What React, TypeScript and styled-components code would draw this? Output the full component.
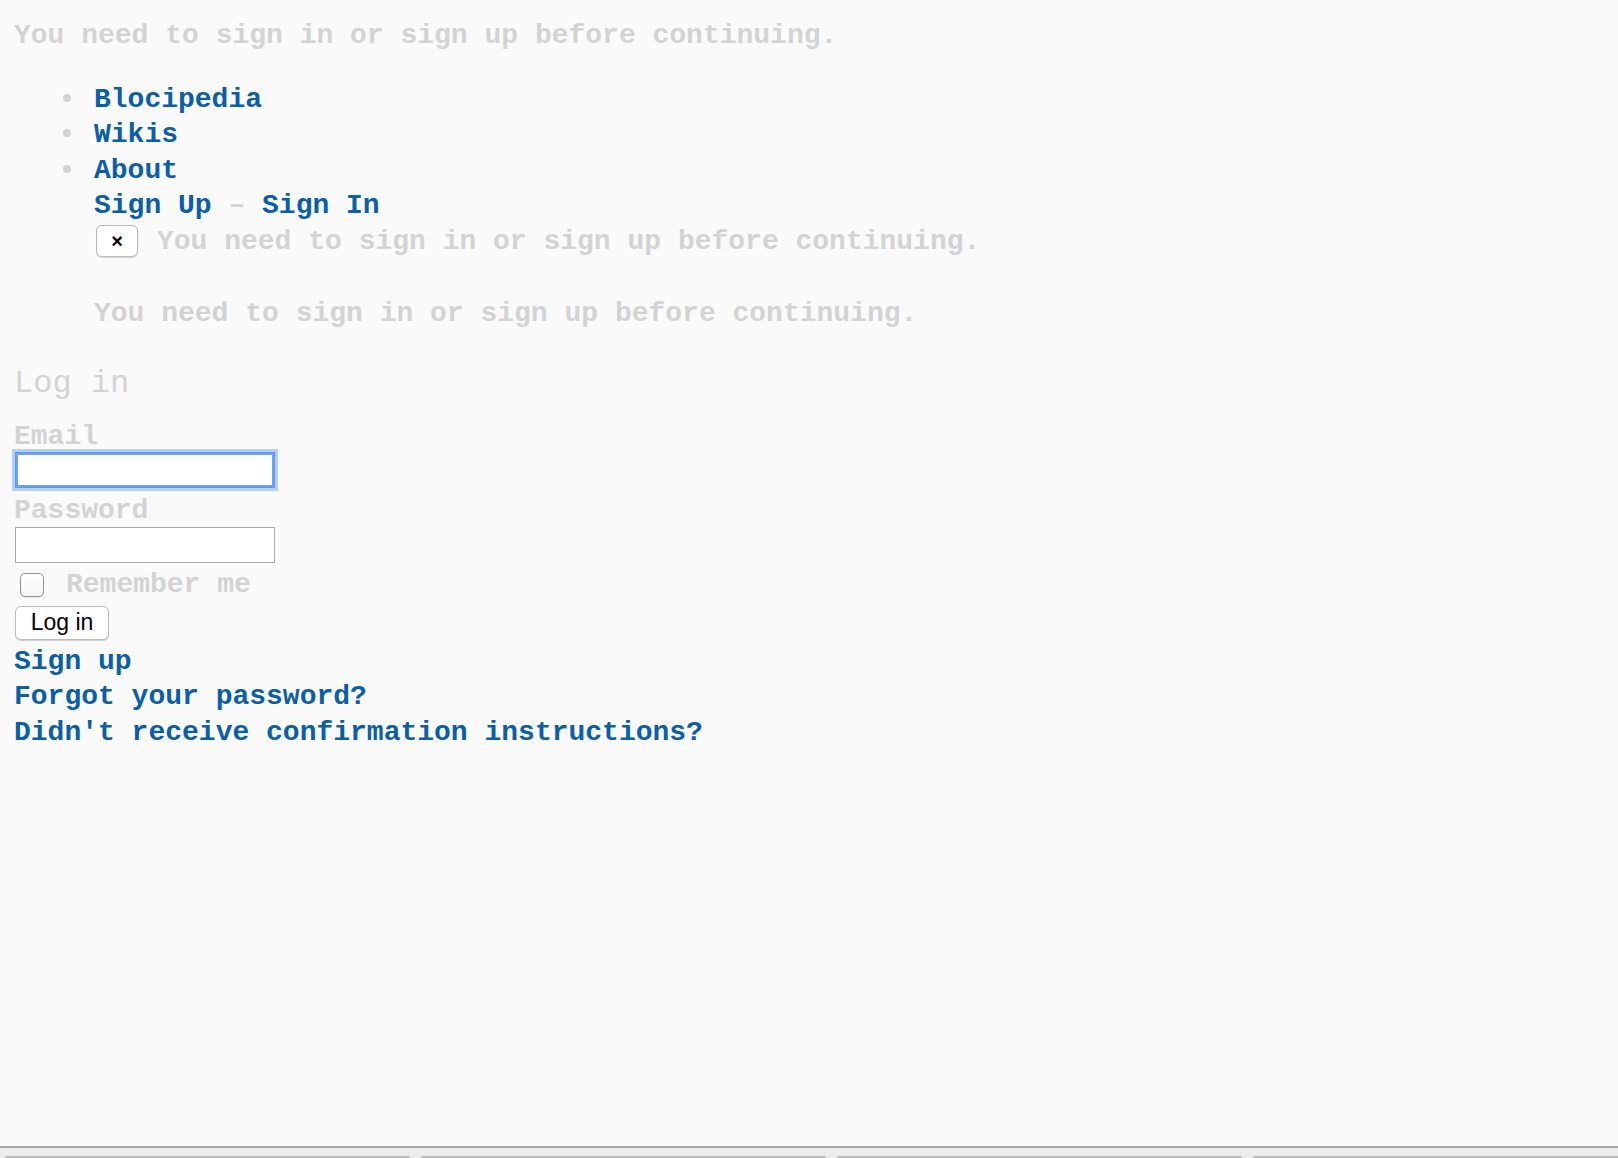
import React from "react";
import styled, { createGlobalStyle } from "styled-components";

const GlobalStyle = createGlobalStyle`
  html, body {
    margin: 0;
    padding: 0;
    background: #fafafa;
  }
  * { box-sizing: border-box; }
`;

const MUTED = "#d3d3d3";
const LINK = "#0b5ea8";

const Page = styled.div`
  min-height: 100vh;
  display: flex;
  flex-direction: column;
  font-family: "Liberation Mono", "Courier New", monospace;
  font-weight: 700;
  font-size: 28px;
  line-height: 35.5px;
  color: ${MUTED};
`;

const Content = styled.main`
  padding: 18px 14px 0;
  display: flex;
  flex-direction: column;
`;

const Notice = styled.div<{ $gap?: number }>`
  margin-top: ${(p) => p.$gap ?? 0}px;
  white-space: pre;
`;

const Link = styled.a`
  color: ${LINK};
  text-decoration: none;
  cursor: pointer;
`;

const NavList = styled.ul`
  margin: 28px 0 0;
  padding: 0 0 0 80px;
  list-style: none;
`;

const NavItem = styled.li<{ $bullet?: boolean }>`
  &::before {
    content: "";
    display: ${(p) => (p.$bullet ? "inline-block" : "none")};
    width: 8px;
    height: 8px;
    margin: 0 23px 0 -31px;
    border-radius: 50%;
    background: ${MUTED};
    vertical-align: 5px;
  }
`;

const Dash = styled.span`
  color: ${MUTED};
`;

const AlertRow = styled.div`
  display: flex;
  align-items: center;
  gap: 19px;
  height: 35.5px;
  padding-left: 2px;
`;

const CloseButton = styled.button`
  width: 42px;
  height: 32px;
  padding: 0;
  display: flex;
  align-items: center;
  justify-content: center;
  background: #ffffff;
  border: 1px solid #b8b8b8;
  border-radius: 6px;
  box-shadow: 0 1px 1px rgba(0, 0, 0, 0.15);
  font-family: "Liberation Sans", Arial, sans-serif;
  font-weight: 700;
  font-size: 20px;
  line-height: 1;
  color: #000;
`;

const Heading = styled.h2`
  margin: 34px 0 0;
  font-size: 32px;
  line-height: 36px;
  font-weight: 400;
  color: ${MUTED};
`;

const Form = styled.form`
  display: flex;
  flex-direction: column;
  align-items: flex-start;
  margin-top: 21px;
`;

const FieldLabel = styled.label<{ $gap?: number }>`
  display: block;
  line-height: 28px;
  margin-top: ${(p) => p.$gap ?? 0}px;
`;

const TextInput = styled.input<{ $focused?: boolean; $gap?: number }>`
  display: block;
  width: 260px;
  height: 36px;
  margin: ${(p) => p.$gap ?? 0}px 0 0 1px;
  background: #ffffff;
  border: 1px solid ${(p) => (p.$focused ? "#5b98ee" : "#a9a9a9")};
  border-radius: 0;
  box-shadow: ${(p) =>
    p.$focused
      ? "inset 0 0 0 2px #6aa3f3, 0 0 0 3px rgba(120, 170, 245, 0.55)"
      : "none"};
  outline: none;
  font-size: 20px;
`;

const CheckRow = styled.div`
  display: flex;
  align-items: center;
  gap: 22px;
  height: 28px;
  line-height: 28px;
  margin-top: 8px;
  padding-left: 6px;
`;

const CheckBox = styled.input.attrs({ type: "checkbox" })`
  appearance: none;
  margin: 0;
  width: 24px;
  height: 24px;
  border: 1px solid #8f8f8f;
  border-radius: 5px;
  background: linear-gradient(#ffffff, #f4f4f4);
  box-shadow: 0 1px 1px rgba(0, 0, 0, 0.08);
`;

const SubmitButton = styled.button`
  margin: 6.5px 0 0 1px;
  width: 94px;
  height: 34px;
  padding: 0;
  background: #ffffff;
  border: 1px solid #bdbdbd;
  border-radius: 6px;
  box-shadow: 0 1px 1px rgba(0, 0, 0, 0.18);
  font-family: "Liberation Sans", Arial, sans-serif;
  font-weight: 400;
  font-size: 23px;
  line-height: 1;
  color: #000;
`;

const LinkList = styled.div`
  display: flex;
  flex-direction: column;
  margin-top: 4px;
`;

const BrowserBar = styled.footer`
  margin-top: auto;
  height: 12px;
  border-top: 2px solid #a6a6a6;
  background: #ececec;
  display: flex;
  align-items: flex-end;
  gap: 11px;
  padding: 0 0 0 5px;
`;

const Tab = styled.div`
  flex: 0 0 405px;
  height: 2px;
  background: #bdbdbd;
  border-radius: 2px 2px 0 0;
`;

const MESSAGE = "You need to sign in or sign up before continuing.";

export default function App() {
  return (
    <>
      <GlobalStyle />
      <Page>
        <Content>
          <Notice>{MESSAGE}</Notice>
          <NavList>
            <NavItem $bullet>
              <Link>Blocipedia</Link>
            </NavItem>
            <NavItem $bullet>
              <Link>Wikis</Link>
            </NavItem>
            <NavItem $bullet>
              <Link>About</Link>
            </NavItem>
            <NavItem>
              <Link>Sign Up</Link>
              <Dash> – </Dash>
              <Link>Sign In</Link>
            </NavItem>
            <NavItem>
              <AlertRow>
                <CloseButton type="button">×</CloseButton>
                <span>{MESSAGE}</span>
              </AlertRow>
            </NavItem>
            <NavItem>
              <Notice $gap={37}>{MESSAGE}</Notice>
            </NavItem>
          </NavList>
          <Heading>Log in</Heading>
          <Form onSubmit={(e) => e.preventDefault()}>
            <FieldLabel htmlFor="email">Email</FieldLabel>
            <TextInput id="email" type="email" $focused $gap={1.5} />
            <FieldLabel htmlFor="password" $gap={8.5}>
              Password
            </FieldLabel>
            <TextInput id="password" type="password" $gap={2.5} />
            <CheckRow>
              <CheckBox id="remember" />
              <label htmlFor="remember">Remember me</label>
            </CheckRow>
            <SubmitButton type="submit">Log in</SubmitButton>
          </Form>
          <LinkList>
            <Link>Sign up</Link>
            <Link>Forgot your password?</Link>
            <Link>Didn't receive confirmation instructions?</Link>
          </LinkList>
        </Content>
        <BrowserBar>
          <Tab />
          <Tab />
          <Tab />
          <Tab />
        </BrowserBar>
      </Page>
    </>
  );
}
